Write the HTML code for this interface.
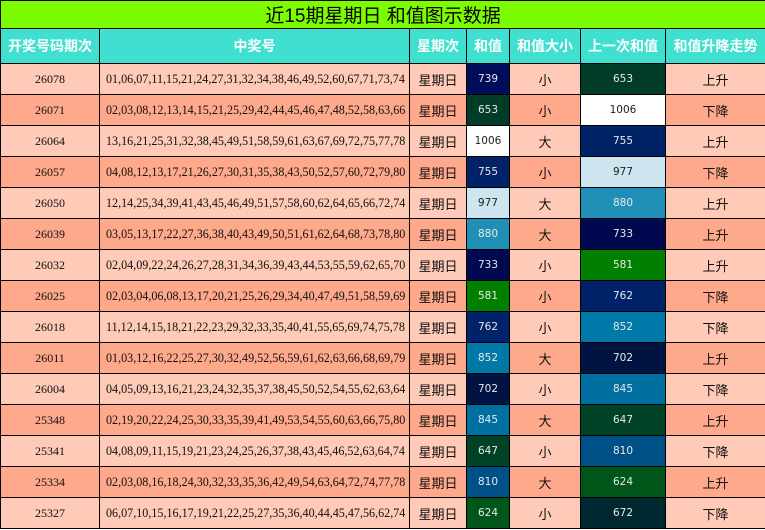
<!DOCTYPE html>
<html><head><meta charset="utf-8"><style>
html,body{margin:0;padding:0;background:#fff;width:765px;height:530px;overflow:hidden}
table{border-collapse:collapse;table-layout:fixed;width:765px;font-family:"Liberation Serif","Noto Serif CJK SC",serif;font-size:12px;color:#111}
td,th{border:1px solid #000;padding:0;text-align:center;white-space:nowrap;overflow:hidden}
.t td{height:27px;background:#7cfc00;font-family:"Liberation Sans","Noto Sans CJK SC",sans-serif;font-size:19px;color:#000}
th{height:34px;background:#40e0d0;color:#fff;font-family:"Liberation Sans","Noto Sans CJK SC",sans-serif;font-size:14px;font-weight:bold}
tr.r td{height:30px}
tr.a td{background:#ffcab8}
tr.b td{background:#ffa98c}
td.n{text-align:left;padding-left:6px;font-size:12.1px}
td.v{font-family:"DejaVu Sans",sans-serif;font-size:10.5px;color:#e8e8e8}
td.w{color:#222}
td.cn{font-family:"Liberation Sans","Noto Sans CJK SC",sans-serif;font-size:13px}
</style></head><body>
<table>
<colgroup><col style="width:99px"><col style="width:310px"><col style="width:57px"><col style="width:43px"><col style="width:71px"><col style="width:85px"><col style="width:100px"></colgroup>
<tr class="t"><td colspan="7">近15期星期日 和值图示数据</td></tr>
<tr><th>开奖号码期次</th><th>中奖号</th><th>星期次</th><th>和值</th><th>和值大小</th><th>上一次和值</th><th>和值升降走势</th></tr>
<tr class="r a"><td>26078</td><td class="n">01,06,07,11,15,21,24,27,31,32,34,38,46,49,52,60,67,71,73,74</td><td class="cn">星期日</td><td class="v" style="background:#000c5a">739</td><td class="cn">小</td><td class="v" style="background:#003c28">653</td><td class="cn">上升</td></tr>
<tr class="r b"><td>26071</td><td class="n">02,03,08,12,13,14,15,21,25,29,42,44,45,46,47,48,52,58,63,66</td><td class="cn">星期日</td><td class="v" style="background:#003c28">653</td><td class="cn">小</td><td class="v w" style="background:#fff">1006</td><td class="cn">下降</td></tr>
<tr class="r a"><td>26064</td><td class="n">13,16,21,25,31,32,38,45,49,51,58,59,61,63,67,69,72,75,77,78</td><td class="cn">星期日</td><td class="v w" style="background:#fff">1006</td><td class="cn">大</td><td class="v" style="background:#002266">755</td><td class="cn">上升</td></tr>
<tr class="r b"><td>26057</td><td class="n">04,08,12,13,17,21,26,27,30,31,35,38,43,50,52,57,60,72,79,80</td><td class="cn">星期日</td><td class="v" style="background:#002266">755</td><td class="cn">小</td><td class="v w" style="background:#cde5ef">977</td><td class="cn">下降</td></tr>
<tr class="r a"><td>26050</td><td class="n">12,14,25,34,39,41,43,45,46,49,51,57,58,60,62,64,65,66,72,74</td><td class="cn">星期日</td><td class="v w" style="background:#cde5ef">977</td><td class="cn">大</td><td class="v" style="background:#208fb8">880</td><td class="cn">上升</td></tr>
<tr class="r b"><td>26039</td><td class="n">03,05,13,17,22,27,36,38,40,43,49,50,51,61,62,64,68,73,78,80</td><td class="cn">星期日</td><td class="v" style="background:#208fb8">880</td><td class="cn">大</td><td class="v" style="background:#000850">733</td><td class="cn">上升</td></tr>
<tr class="r a"><td>26032</td><td class="n">02,04,09,22,24,26,27,28,31,34,36,39,43,44,53,55,59,62,65,70</td><td class="cn">星期日</td><td class="v" style="background:#000850">733</td><td class="cn">小</td><td class="v" style="background:#007f00">581</td><td class="cn">上升</td></tr>
<tr class="r b"><td>26025</td><td class="n">02,03,04,06,08,13,17,20,21,25,26,29,34,40,47,49,51,58,59,69</td><td class="cn">星期日</td><td class="v" style="background:#007f00">581</td><td class="cn">小</td><td class="v" style="background:#002268">762</td><td class="cn">下降</td></tr>
<tr class="r a"><td>26018</td><td class="n">11,12,14,15,18,21,22,23,29,32,33,35,40,41,55,65,69,74,75,78</td><td class="cn">星期日</td><td class="v" style="background:#002268">762</td><td class="cn">小</td><td class="v" style="background:#0078a8">852</td><td class="cn">下降</td></tr>
<tr class="r b"><td>26011</td><td class="n">01,03,12,16,22,25,27,30,32,49,52,56,59,61,62,63,66,68,69,79</td><td class="cn">星期日</td><td class="v" style="background:#0078a8">852</td><td class="cn">大</td><td class="v" style="background:#001444">702</td><td class="cn">上升</td></tr>
<tr class="r a"><td>26004</td><td class="n">04,05,09,13,16,21,23,24,32,35,37,38,45,50,52,54,55,62,63,64</td><td class="cn">星期日</td><td class="v" style="background:#001444">702</td><td class="cn">小</td><td class="v" style="background:#0070a0">845</td><td class="cn">下降</td></tr>
<tr class="r b"><td>25348</td><td class="n">02,19,20,22,24,25,30,33,35,39,41,49,53,54,55,60,63,66,75,80</td><td class="cn">星期日</td><td class="v" style="background:#0070a0">845</td><td class="cn">大</td><td class="v" style="background:#004226">647</td><td class="cn">上升</td></tr>
<tr class="r a"><td>25341</td><td class="n">04,08,09,11,15,19,21,23,24,25,26,37,38,43,45,46,52,63,64,74</td><td class="cn">星期日</td><td class="v" style="background:#004226">647</td><td class="cn">小</td><td class="v" style="background:#005088">810</td><td class="cn">下降</td></tr>
<tr class="r b"><td>25334</td><td class="n">02,03,08,16,18,24,30,32,33,35,36,42,49,54,63,64,72,74,77,78</td><td class="cn">星期日</td><td class="v" style="background:#005088">810</td><td class="cn">大</td><td class="v" style="background:#005518">624</td><td class="cn">上升</td></tr>
<tr class="r a"><td>25327</td><td class="n">06,07,10,15,16,17,19,21,22,25,27,35,36,40,44,45,47,56,62,74</td><td class="cn">星期日</td><td class="v" style="background:#005518">624</td><td class="cn">小</td><td class="v" style="background:#002830">672</td><td class="cn">下降</td></tr>
</table>
</body></html>
